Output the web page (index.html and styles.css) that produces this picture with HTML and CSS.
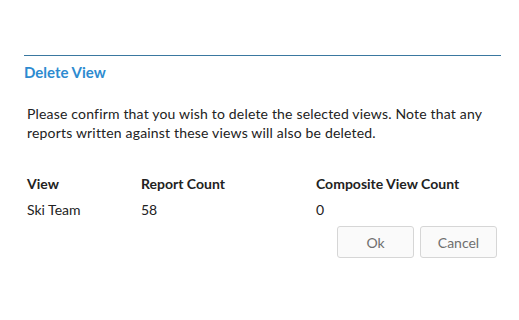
FILE: index.html
```html
<!DOCTYPE html>
<html lang="en">
<head>
  <meta charset="UTF-8">
  <meta name="viewport" content="width=device-width, initial-scale=1.0">
  <title>Delete View</title>
  <link rel="stylesheet" href="styles.css">
</head>
<body>
  <div class="dialog">
    <h2 class="title">Delete View</h2>
    <p class="message">Please confirm that you wish to delete the selected views. Note that any reports written against these views will also be deleted.</p>
    <table class="views">
      <thead>
        <tr>
          <th class="col-view">View</th>
          <th class="col-count">Report Count</th>
          <th>Composite View Count</th>
        </tr>
      </thead>
      <tbody>
        <tr>
          <td>Ski Team</td>
          <td>58</td>
          <td>0</td>
        </tr>
      </tbody>
    </table>
    <div class="actions">
      <button type="button" class="btn">Ok</button>
      <button type="button" class="btn">Cancel</button>
    </div>
  </div>
</body>
</html>
```

FILE: styles.css
```css
* {
  margin: 0;
  padding: 0;
  box-sizing: border-box;
}

body {
  font-family: Lato, "Open Sans", sans-serif;
  font-size: 14px;
  color: #222;
  background-color: #fff;
  padding-top: 55px;
}

.dialog {
  margin-left: 24px;
  width: 477px;
  border-top: 1px solid #3a78a0;
}

.title {
  font-size: 15px;
  font-weight: bold;
  color: #2d8bd0;
  line-height: 20px;
  margin-top: 6px;
}

.message {
  line-height: 19px;
  margin-top: 22px;
  padding: 0 10px 0 3px;
  letter-spacing: 0.18px;
}

.views {
  border-collapse: collapse;
  margin-top: 32px;
  margin-left: 3px;
  text-align: left;
}

.views th,
.views td {
  padding: 0;
  line-height: 20px;
}

.views th {
  font-weight: bold;
}

.views td {
  padding-top: 6px;
}

.col-view {
  width: 114px;
}

.col-count {
  width: 175px;
}

.actions {
  display: flex;
  justify-content: flex-end;
  gap: 6px;
  margin-top: 6px;
  padding-right: 4px;
}

.btn {
  width: 77px;
  height: 32px;
  font-family: inherit;
  font-size: 14px;
  color: #6f6f6f;
  background-color: #fafafa;
  border: 1px solid #d6d6d6;
  border-radius: 3px;
}
```
